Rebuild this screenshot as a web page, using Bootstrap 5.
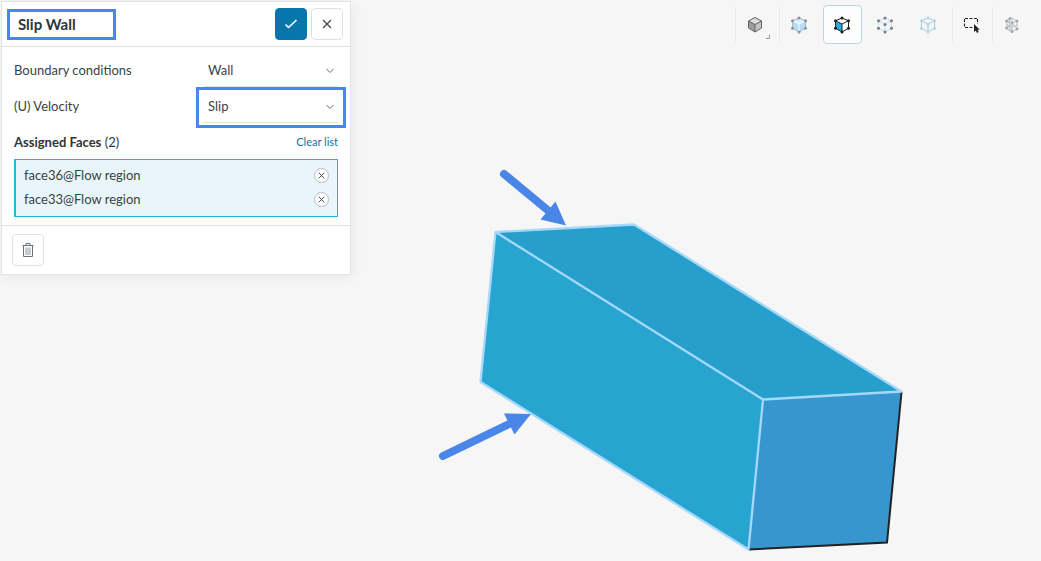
<!DOCTYPE html>
<html lang="en">
<head>
<meta charset="utf-8">
<meta name="viewport" content="width=device-width, initial-scale=1">
<title>Slip Wall</title>
<link href="https://cdn.jsdelivr.net/npm/bootstrap@5.3.0/dist/css/bootstrap.min.css" rel="stylesheet">
<style>
  body { background: #f6f6f6; color: #3a4245; font: 13px/20px Lato, sans-serif; }
  .workspace { min-height: 100vh; }
  .scene { height: 100vh; }
  .panel { top: 1px; left: 1px; width: 350px; max-width: 100%; border: 1px solid #e3e3e3; box-shadow: 2px 3px 12px rgba(0,0,0,.05); }
  .panel-top { height: 45px; padding: 0 7px 0 5px; border-bottom: 1px solid #e3e3e3; }
  .title-input { width: 109px; height: 31px; padding: 0 8px; border: 3px solid #4a86e8; font-weight: 700; font-size: 15px; color: #2e3538; outline: 0; }
  .square-btn { width: 32px; height: 32px; border: 1px solid #e0e0e0; border-radius: 4px; background: #fff; color: #444b4f; }
  .square-btn.primary { background: #0776ab; border-color: #0776ab; color: #fff; }
  .panel-main { padding: 5px 12px 8px; border-bottom: 1px solid #e3e3e3; }
  .field { height: 36px; }
  .list-head { height: 35px; color: #2e3538; }
  .picker { width: 134px; }
  .picker select { width: 100%; height: 34px; padding: 0 4px; border: 0; border-bottom: 1px solid #e3e3e3; border-radius: 0; background: transparent; appearance: none; color: inherit; outline: 0; }
  .picker svg { right: 4px; top: 14px; pointer-events: none; }
  .picker.marked::after { content: ""; position: absolute; inset: -2px -8px -5px; border: 3px solid #4a86e8; pointer-events: none; }
  .clear { font-size: 11px; color: #0776ab; text-decoration: none; }
  .faces { border: 1px solid #29b3dc; border-left-width: 2px; background: #e8f5fb; padding: 3px 8px 5px; }
  .faces li { height: 24px; }
  .remove { width: 15px; height: 15px; border: 1px solid #b9bec1; background: #fff; color: #33393c; }
  .panel-foot { padding: 8px 10px; }
  .tools { top: 5px; right: 9px; gap: 0 4px; }
  .divider { width: 1px; height: 35px; background: #e9e9e9; }
  .group { gap: 4px; }
  .tool { width: 39px; height: 39px; padding: 1px 1px 0 0; border: 1px solid transparent; border-radius: 4px; background: transparent; }
  .tool.active { background: #fdfdfd; border-color: #b7d5e6; }
  .tool > svg:first-child { display: block; margin: 0 auto; }
</style>
</head>
<body>
<svg width="0" height="0" class="position-absolute" aria-hidden="true">
  <symbol id="cube-lines" viewBox="0 0 16 18"><path d="M8 2 14.5 4.8V12.2L8 16 1.5 12.2V4.8ZM1.5 4.8 8 8 14.5 4.8M8 8V16" fill="none" stroke="currentColor"/></symbol>
  <symbol id="cube-dots" viewBox="0 0 16 18"><g fill="currentColor"><circle cx="8" cy="2" r="1.5"/><circle cx="14.5" cy="4.8" r="1.5"/><circle cx="14.5" cy="12.2" r="1.5"/><circle cx="8" cy="16" r="1.5"/><circle cx="1.5" cy="12.2" r="1.5"/><circle cx="1.5" cy="4.8" r="1.5"/></g></symbol>
  <symbol id="cross" viewBox="0 0 10 10"><path d="m1 1 8 8M9 1 1 9" fill="none" stroke="currentColor" stroke-width="1.3"/></symbol>
  <symbol id="chevron" viewBox="0 0 8 8"><path d="M.5 2 4 5.5 7.5 2" fill="none" stroke="#656b6f"/></symbol>
</svg>

<main class="workspace position-relative overflow-hidden">
  <svg class="scene d-block w-100" viewBox="0 0 1041 561" role="img" aria-label="Flow region with two faces selected">
    <path d="M495.500 232 634 224.500 901 391.500 763 399.500Z" fill="#269fcc"/>
    <path d="M495.500 232 763 399.500 748.500 549.500 480.500 382Z" fill="#28a4d1"/>
    <path d="M763 399.500 901 391.500 887 542.500 748.500 549.500Z" fill="#3896cf"/>
    <path d="M901.500 392 887 542.500 748.500 549.500" fill="none" stroke="#222" stroke-width="2"/>
    <path d="M748.500 549.500 480.500 382 495.500 232 634 224.500 901.500 391.500 763 399.500ZM495.500 232 763 399.500" fill="none" stroke="#a5d9fb" stroke-width="2.300" stroke-linejoin="round"/>
    <g stroke="#4a86e8" stroke-width="8" stroke-linecap="round"><path d="m504 174 46 38M443 456 510 423.500"/></g>
    <path d="M566 225.500 555.500 201.500 540.500 219.500ZM531 414 504 413.500 514.500 434.500Z" fill="#4a86e8"/>
  </svg>

  <section class="panel position-absolute bg-white">
    <header class="panel-top d-flex align-items-center">
      <input class="title-input" type="text" value="Slip Wall" aria-label="Name">
      <button class="square-btn primary ms-auto me-1 p-0 d-flex align-items-center justify-content-center" type="button" aria-label="Apply"><svg width="14" height="12" viewBox="0 0 14 12"><path d="m1.500 6.500 3 3L12.500 2" fill="none" stroke="currentColor" stroke-width="1.600"/></svg></button>
      <button class="square-btn p-0 d-flex align-items-center justify-content-center" type="button" aria-label="Close"><svg width="10" height="10"><use href="#cross"/></svg></button>
    </header>
    <div class="panel-main">
      <div class="field d-flex align-items-center justify-content-between">
        <label for="kind">Boundary conditions</label>
        <div class="picker position-relative"><select id="kind"><option>Wall</option></select><svg class="position-absolute" width="8" height="8"><use href="#chevron"/></svg></div>
      </div>
      <div class="field d-flex align-items-center justify-content-between">
        <label for="velocity">(U) Velocity</label>
        <div class="picker marked position-relative"><select id="velocity"><option>Slip</option></select><svg class="position-absolute" width="8" height="8"><use href="#chevron"/></svg></div>
      </div>
      <div class="list-head d-flex align-items-center justify-content-between">
        <div><span class="fw-bold">Assigned Faces</span> (2)</div>
        <a class="clear" href="#">Clear list</a>
      </div>
      <ul class="faces list-unstyled mb-0">
        <li class="d-flex align-items-center justify-content-between">face36@Flow region <button class="remove rounded-circle p-0 d-flex align-items-center justify-content-center" type="button" aria-label="Remove face36"><svg width="7" height="7"><use href="#cross"/></svg></button></li>
        <li class="d-flex align-items-center justify-content-between">face33@Flow region <button class="remove rounded-circle p-0 d-flex align-items-center justify-content-center" type="button" aria-label="Remove face33"><svg width="7" height="7"><use href="#cross"/></svg></button></li>
      </ul>
    </div>
    <footer class="panel-foot">
      <button class="square-btn p-0 d-flex align-items-center justify-content-center" type="button" aria-label="Delete"><svg width="12" height="14" viewBox="0 0 12 14" fill="none" stroke="#6b7174"><path d="M.5 2.500H11.500M4 2.500V.5H8V2.500M1.500 2.500V13.500H10.500V2.500"/><path d="M4 4.500V12M6 4.500V12M8 4.500V12" stroke="#90979b"/></svg></button>
    </footer>
  </section>

  <nav class="tools position-absolute d-flex align-items-center" aria-label="View tools">
    <div class="group d-flex align-items-center">
      <div class="d-flex align-items-center"><span class="divider"></span>
        <button class="tool position-relative" type="button" aria-label="Render mode"><svg width="16" height="18" viewBox="0 0 16 18"><path d="M8 1.500 14.500 5V12L8 16 1.500 12V5Z" fill="#9d9d9d"/><path d="M8 1.500 14.500 5 8 8.500 1.500 5Z" fill="#dedede"/><path d="M8 8.500 14.500 5V12L8 16Z" fill="#c4c4c4"/><path d="M8 1.500 14.500 5V12L8 16 1.500 12V5ZM1.500 5 8 8.500 14.500 5M8 8.500V16" fill="none" stroke="#626262"/></svg><svg class="position-absolute bottom-0 end-0 me-1 mb-1" width="4" height="4" viewBox="0 0 4 4"><path d="M3.500 0V3.500H0" fill="none" stroke="#999"/></svg></button></div>
      <div class="d-flex align-items-center"><span class="divider"></span>
        <button class="tool" type="button" aria-label="Pick volumes"><svg width="16" height="18" viewBox="0 0 16 18"><path d="M8 2 14.500 4.800V12.200L8 16 1.500 12.200V4.800Z" fill="#b5ddf6"/><path d="M8 2 14.500 4.800 8 8 1.500 4.800Z" fill="#d9effd"/><path d="M1.500 4.800 8 8 14.500 4.800M8 8V16" fill="none" stroke="#fff"/><path d="M8 2 14.500 4.800V12.200L8 16 1.500 12.200V4.800Z" fill="none" stroke="#a5bac7"/><use href="#cube-dots" color="#8b9297"/></svg></button></div>
      <button class="tool active" type="button" aria-label="Pick faces" aria-pressed="true"><svg width="16" height="18" viewBox="0 0 16 18"><path d="M1.500 4.800 8 8V16L1.500 12.200Z" fill="#29a9dd"/><use href="#cube-lines" color="#222"/><use href="#cube-dots" color="#1c1c1c"/></svg></button>
      <button class="tool" type="button" aria-label="Pick edges"><svg width="16" height="18" viewBox="0 0 16 18"><use href="#cube-lines" color="#bcdcef"/><use href="#cube-dots" color="#777d80"/><circle cx="8" cy="8.500" r="1.500" fill="#777d80"/></svg></button>
      <button class="tool" type="button" aria-label="Pick vertices"><svg width="16" height="18" viewBox="0 0 16 18"><use href="#cube-lines" color="#b3c0c9"/><use href="#cube-dots" color="#a4d7f7"/><circle cx="8" cy="8.500" r="1.500" fill="#a4d7f7"/></svg></button>
    </div>
    <div class="d-flex align-items-center"><span class="divider"></span>
      <button class="tool" type="button" aria-label="Box selection"><svg width="18" height="18" viewBox="0 0 18 18"><path d="M2 2.500H14M2 11.500H10M1.500 3V11M14.500 3V8" fill="none" stroke="#1f2325" stroke-width="1.100" stroke-dasharray="3 1.500"/><path d="M11 8V16L12.700 14.500 14 17 15.700 16 14.500 13.700H16.800Z" fill="#1f2325"/></svg></button><span class="divider"></span>
      <button class="tool" type="button" aria-label="Pick nodes"><svg width="16" height="18" viewBox="0 0 16 18"><path d="M3 4 8 2 13 5V13L8 16 3 13ZM3 4 8 7 13 5M8 2V16M3 8.500 8 11.500 13 9M3 4 8 11.500M3 8.500 8 16M8 7 13 13M5.500 3V14.500" fill="none" stroke="#bac1c5"/><g fill="#a3abaf"><circle cx="6" cy="2.500" r="1.400"/><circle cx="13" cy="5" r="1.500"/><circle cx="2.500" cy="5" r="1.500"/><circle cx="2.500" cy="12" r="1.500"/><circle cx="8" cy="15.500" r="1.500"/><circle cx="13" cy="13" r="1.500"/><circle cx="8" cy="7" r="1.500"/></g></svg></button></div>
  </nav>
</main>
<script src="https://cdn.jsdelivr.net/npm/bootstrap@5.3.0/dist/js/bootstrap.bundle.min.js"></script>
</body>
</html>
